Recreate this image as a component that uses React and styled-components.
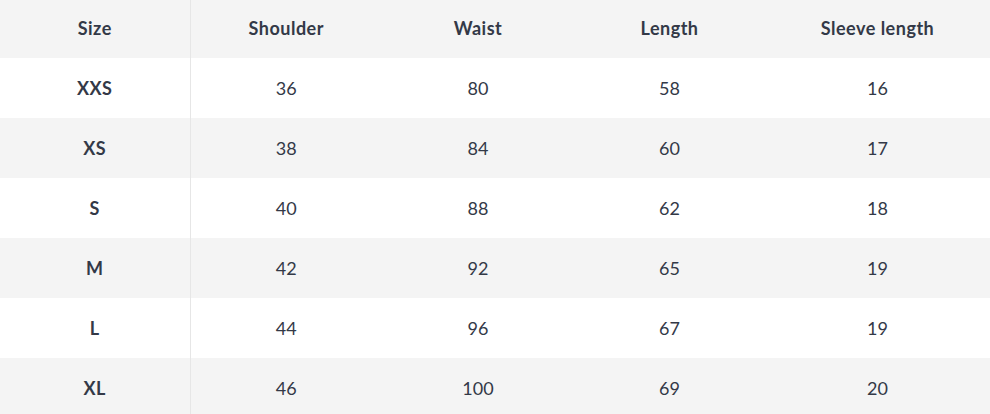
import styled, { createGlobalStyle } from 'styled-components';

const GlobalStyle = createGlobalStyle`
  body {
    margin: 0;
    background: #ffffff;
    font-family: Lato, "Open Sans", sans-serif;
    color: #333947;
  }
`;

const Table = styled.table`
  width: 990px;
  border-collapse: collapse;
  table-layout: fixed;
  font-size: 18px;
`;

const Row = styled.tr`
  height: ${(props) => (props.head ? '58px' : '60px')};
  background-color: ${(props) => (props.shaded ? '#f4f4f4' : '#ffffff')};
`;

const HeadCell = styled.th`
  font-weight: 700;
  letter-spacing: 0.5px;
  text-align: center;
  padding: 0 0 3px;
  border-right: ${(props) => (props.first ? '1px solid #e6e6e6' : 'none')};
`;

const Cell = styled.td`
  text-align: center;
  padding: 0;
  font-weight: ${(props) => (props.first ? 700 : 400)};
  letter-spacing: ${(props) => (props.first ? '0.5px' : '0')};
  border-right: ${(props) => (props.first ? '1px solid #e6e6e6' : 'none')};
`;

const columns = ['Size', 'Shoulder', 'Waist', 'Length', 'Sleeve length'];
const widths = [190, 192, 192, 191, 225];

const rows = [
  ['XXS', 36, 80, 58, 16],
  ['XS', 38, 84, 60, 17],
  ['S', 40, 88, 62, 18],
  ['M', 42, 92, 65, 19],
  ['L', 44, 96, 67, 19],
  ['XL', 46, 100, 69, 20],
];

export default function App() {
  return (
    <>
      <GlobalStyle />
      <Table>
        <colgroup>
          {widths.map((w, i) => (
            <col key={i} style={{ width: w }} />
          ))}
        </colgroup>
        <thead>
          <Row head shaded>
            {columns.map((c, i) => (
              <HeadCell key={c} first={i === 0}>
                {c}
              </HeadCell>
            ))}
          </Row>
        </thead>
        <tbody>
          {rows.map((r, ri) => (
            <Row key={r[0]} shaded={ri % 2 === 1}>
              {r.map((v, i) => (
                <Cell key={i} first={i === 0}>
                  {v}
                </Cell>
              ))}
            </Row>
          ))}
        </tbody>
      </Table>
    </>
  );
}
